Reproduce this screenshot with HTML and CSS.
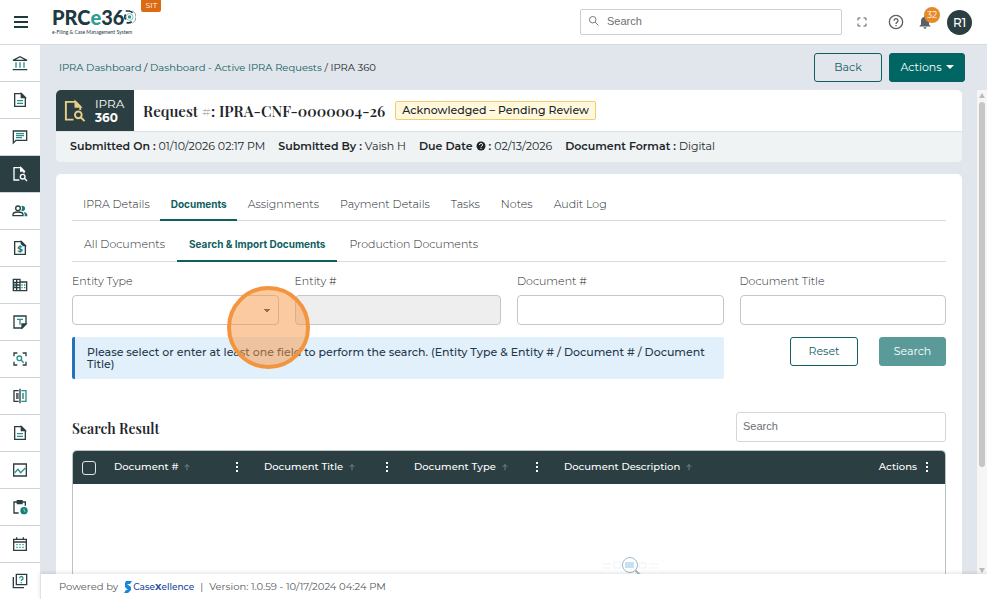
FILE: index.html
```
<!DOCTYPE html>
<html lang="en">
<head>
  <meta charset="UTF-8">
  <meta name="viewport" content="width=device-width, initial-scale=1.0">
  <title>IPRA 360 | Search &amp; Import Documents</title>
  <link rel="stylesheet" href="styles.css">
</head>
<body>
  <svg class="sprite" aria-hidden="true">
    <symbol id="i-doc" viewBox="0 0 24 24">
      <path d="M14 2.500H4v19h16V8.500z"/><path d="M14 2.500v6h6z" fill="currentColor"/>
      <path class="accent" d="M7.500 13h9M7.500 17h9"/>
    </symbol>
    <symbol id="i-docsearch" viewBox="0 0 24 24">
      <path d="M11 21H3V2.500h10l5 5V11"/><path d="M13 2.500v5h5z" fill="currentColor"/>
      <circle cx="16" cy="16" r="3.500"/><path d="M18.500 18.500l4 4"/>
    </symbol>
    <symbol id="i-up" viewBox="0 0 10 10"><path d="M5 9V2M2 5l3-3 3 3"/></symbol>
    <symbol id="i-dots" viewBox="0 0 4 12"><path d="M1 1h2v2H1zM1 5h2v2H1zM1 9h2v2H1z"/></symbol>
  </svg>

  <header class="topbar">
    <button class="menu-btn" aria-label="Toggle menu"><span></span><span></span><span></span></button>
    <a class="logo" href="#">
      <span class="logo-name">PRC<em>e</em>36<svg class="logo-ring" viewBox="0 0 14 18">
        <path d="M2 2h4a7 7 0 0 1 4 2M2 6a5 5 0 0 0 0 6M3 15.500a7 7 0 0 0 6-1" fill="none" stroke="#20393f" stroke-width="2"/>
        <path d="M10 2a8 8 0 0 1 0 14" fill="none" stroke="#6f9297" stroke-width="1"/>
        <circle cx="6.500" cy="9" r="2" fill="#2a9d94" stroke="none"/>
        <circle cx="6.500" cy="9" r="4" fill="none" stroke="#7fb9b6" stroke-width="1"/>
      </svg></span>
      <span class="logo-sub">e-Filing &amp; Case Management System</span>
    </a>
    <span class="env">SIT</span>
    <div class="top-search">
      <svg viewBox="0 0 14 14"><circle cx="5.500" cy="5.500" r="3.800"/><path d="M8.300 8.300l4 4"/></svg>
      <input type="text" placeholder="Search" aria-label="Search">
    </div>
    <button class="icon-btn" aria-label="Full screen">
      <svg class="full" viewBox="0 0 10 10"><path d="M1 3.500V1h2.500M6.500 1H9v2.500M9 6.500V9H6.500M3.500 9H1V6.500"/></svg>
    </button>
    <button class="icon-btn" aria-label="Help">
      <svg class="help" viewBox="0 0 24 24"><circle cx="12" cy="12" r="10"/><path d="M9 10a3 3 0 1 1 4.500 2.500C12.500 13 12 13.500 12 15M12 16.500v2"/></svg>
    </button>
    <button class="icon-btn bell" aria-label="Notifications">
      <svg viewBox="0 0 12 14"><path d="M6 1a1 1 0 0 1 1 1c2 .6 3 2 3 4v3.500L11.500 11v.6H.5V11L2 9.500V6c0-2 1-3.400 3-4a1 1 0 0 1 1-1zM4.500 12.300h3a1.500 1.500 0 0 1-3 0z"/></svg>
      <span class="count">32</span>
    </button>
    <button class="avatar">R1</button>
  </header>

  <div class="shell">
    <nav class="sidebar">
      <a href="#" aria-label="Home"><svg viewBox="0 0 24 24"><path d="M1.500 8L12 2.500 22.500 8zM1 22h22"/><path class="accent" d="M6 11v8M12 11v8M18 11v8"/></svg></a>
      <a href="#" aria-label="Filings"><svg><use href="#i-doc"/></svg></a>
      <a href="#" aria-label="Messages"><svg viewBox="0 0 24 24"><path d="M2 21V3h20v14H6z"/><path class="accent" d="M6 7h12M6 10h12M6 13h9"/></svg></a>
      <a href="#" class="active" aria-label="IPRA"><svg><use href="#i-docsearch"/></svg></a>
      <a href="#" aria-label="Contacts"><svg viewBox="0 0 24 24"><circle cx="9" cy="8" r="3.500"/><path d="M1.500 19v-1.500c0-2.500 4-4 7.500-4s7.500 1.500 7.500 4V19z"/><path class="fill" d="M14 4.500a4 4 0 1 1 0 7.200 6 6 0 0 0 0-7.200zM17 13c3 .6 6 2 6 4.500V20h-4v-2.500c0-2-.8-3.400-2-4.500z"/></svg></a>
      <a href="#" aria-label="Billing"><svg viewBox="0 0 24 24"><path d="M14 2.500H4v19h16V8.500z"/><path d="M14 2.500v3l3 3h3z" fill="currentColor"/><text class="dollar" x="12" y="18">$</text></svg></a>
      <a href="#" aria-label="Organizations"><svg viewBox="0 0 24 24"><path d="M2 3.500h10v17H2zM2 8h10M2 12h10M2 16h10M7 3.500v17M12 7.500h10v13H12"/><path class="accent" d="M14 12h2M14 16h2M18 12h2M18 16h2M3.500 10h2M3.500 14h2"/></svg></a>
      <a href="#" aria-label="Templates"><svg viewBox="0 0 24 24"><path d="M3 3h18v12l-6 6H3z"/><path d="M21 15h-6v6z" fill="currentColor"/><path class="accent" d="M7.500 8h9M12 8v8"/></svg></a>
      <a href="#" aria-label="Scan search"><svg viewBox="0 0 24 24"><path d="M3 8V3h5M16 3h5v5M21 16v5h-5M8 21H3v-5"/><circle class="accent" cx="11" cy="11" r="3.500"/><path class="accent" d="M13.500 13.500l4 4"/></svg></a>
      <a href="#" aria-label="Compare"><svg viewBox="0 0 24 24"><path d="M10 4H3v16h7M12 1v22M6 9h4M6 12h4M6 15h4"/><path class="accent" d="M14 4h7v16h-7M15 9h3M15 12h3M15 15h3"/></svg></a>
      <a href="#" aria-label="Documents"><svg><use href="#i-doc"/></svg></a>
      <a href="#" aria-label="Reports"><svg viewBox="0 0 24 24"><path d="M2.500 3h19v18h-19z"/><path class="accent" d="M4 16l5-5 4 5 7-7"/></svg></a>
      <a href="#" aria-label="Pending tasks"><svg viewBox="0 0 24 24"><path d="M10 21H3V4.500h17V10"/><path d="M8 2.500h7V7H8z" fill="currentColor"/><circle class="fill" cx="18" cy="17.500" r="5.500"/><path d="M18 14.500v3l2 1.500" stroke="#fff" stroke-width="1"/></svg></a>
      <a href="#" aria-label="Calendar"><svg viewBox="0 0 24 24"><path d="M2.500 5h19v16.500h-19zM3 9h18M7 2v3M17 2v3"/><path class="accent" d="M6.500 13h2M11 13h2M15.500 13h2M6.500 17h2M11 17h2M15.500 17h2"/></svg></a>
      <a href="#" aria-label="Help library"><svg viewBox="0 0 24 24"><path d="M6.500 2h15.500v15.500H6.500zM2 6v16h16"/><path class="accent" d="M11.500 8a2.500 2.500 0 1 1 3.700 2c-1 .6-1.200 1-1.200 2M14 13.500v2"/></svg></a>
    </nav>

    <div class="main">
      <div class="page-head">
        <div class="breadcrumb"><a href="#">IPRA Dashboard</a> / <a href="#">Dashboard - Active IPRA Requests</a> / <span>IPRA 360</span></div>
        <button class="btn btn-outline">Back</button>
        <button class="btn btn-actions">Actions <i class="caret"></i></button>
      </div>

      <div class="scroll-area">
        <div class="content">
          <section class="request">
            <div class="request-top">
              <div class="badge-360">
                <svg><use href="#i-docsearch"/></svg>
                <div><span>IPRA</span><b>360</b></div>
              </div>
              <h1>Request <small>#</small>: IPRA-CNF-0000004-26</h1>
              <span class="status">Acknowledged – Pending Review</span>
            </div>
            <div class="request-info">
              <div><b>Submitted On :</b> 01/10/2026 02:17 PM</div>
              <div><b>Submitted By :</b> Vaish H</div>
              <div><b>Due Date <svg viewBox="0 0 10 10"><circle cx="5" cy="5" r="4.500"/><path d="M3.500 4a1.500 1.500 0 1 1 2.200 1.200C5 5.500 5 5.800 5 6.200M5 7v1"/></svg> :</b> 02/13/2026</div>
              <div><b>Document Format :</b> Digital</div>
            </div>
          </section>

          <section class="panel">
            <nav class="tabs">
              <a href="#">IPRA Details</a>
              <a href="#" class="active">Documents</a>
              <a href="#">Assignments</a>
              <a href="#">Payment Details</a>
              <a href="#">Tasks</a>
              <a href="#">Notes</a>
              <a href="#">Audit Log</a>
            </nav>
            <nav class="tabs sub-tabs">
              <a href="#">All Documents</a>
              <a href="#" class="active">Search &amp; Import Documents</a>
              <a href="#">Production Documents</a>
            </nav>

            <form class="filters">
              <div class="field">
                <label for="entityType">Entity Type</label>
                <select id="entityType"><option></option></select>
                <span class="click-mark"></span>
              </div>
              <div class="field">
                <label for="entityNo">Entity #</label>
                <input type="text" id="entityNo" disabled>
              </div>
              <div class="field">
                <label for="documentNo">Document #</label>
                <input type="text" id="documentNo">
              </div>
              <div class="field">
                <label for="documentTitle">Document Title</label>
                <input type="text" id="documentTitle">
              </div>
              <div class="note">Please select or enter at least one field to perform the search. (Entity Type &amp; Entity # / Document # / Document Title)</div>
              <div class="filter-btns">
                <button type="reset" class="btn btn-outline">Reset</button>
                <button type="button" class="btn btn-search">Search</button>
              </div>
            </form>

            <div class="result-head">
              <h2>Search Result</h2>
              <input type="text" placeholder="Search" aria-label="Search results">
            </div>

            <div class="grid-box">
              <table>
                <thead>
                  <tr>
                    <th class="col-check"><input type="checkbox" aria-label="Select all"></th>
                    <th class="col"><div>Document # <svg class="up"><use href="#i-up"/></svg><svg class="dots"><use href="#i-dots"/></svg></div></th>
                    <th class="col"><div>Document Title <svg class="up"><use href="#i-up"/></svg><svg class="dots"><use href="#i-dots"/></svg></div></th>
                    <th class="col"><div>Document Type <svg class="up"><use href="#i-up"/></svg><svg class="dots"><use href="#i-dots"/></svg></div></th>
                    <th><div>Document Description <svg class="up"><use href="#i-up"/></svg></div></th>
                    <th class="col-actions"><div>Actions <svg class="dots"><use href="#i-dots"/></svg></div></th>
                  </tr>
                </thead>
              </table>
              <div class="empty">
                <svg viewBox="0 0 60 28">
                  <path d="M2 11h9M2 15h9M14 9h7v6h-7zM39 10h7v5h-7zM49 11h9M49 15h9" stroke="#edf1f4"/>
                  <path d="M25 9h9v6h-9z" fill="#c5e2f3" stroke="none"/>
                  <circle cx="30" cy="12" r="7.500" stroke="#9fb8c8"/>
                  <path d="M35.500 17.500l7 7" stroke="#9fb8c8" stroke-width="2"/>
                </svg>
              </div>
            </div>
          </section>
        </div>
        <div class="scrollbar"><i class="arrow"></i><i class="thumb"></i><i class="arrow down"></i></div>
      </div>

      <footer class="footer">
        <span>Powered by</span>
        <a class="brand" href="#"><svg viewBox="0 0 8 12"><path d="M2 0h6L6 3H3l4 3v3l-3 3H0l2-3h2L1 6V2z" fill="#1489d8"/></svg>Case<b>X</b>ellence</a>
        <span>|</span>
        <span>Version: 1.0.59 - 10/17/2024 04:24 PM</span>
      </footer>
    </div>
  </div>
</body>
</html>
```

FILE: styles.css
```
* {
  box-sizing: border-box;
}

body {
  margin: 0;
  height: 100vh;
  display: flex;
  flex-direction: column;
  overflow: hidden;
  font-family: Montserrat, Inter, sans-serif;
  font-size: 11px;
  line-height: 14px;
  color: #212529;
  background-color: #fff;
}

a {
  text-decoration: none;
  color: inherit;
}

button,
input,
select {
  font-family: inherit;
  font-size: 11px;
}

button {
  cursor: pointer;
}

svg {
  fill: none;
  stroke: currentColor;
  flex: none;
}

.sprite {
  display: none;
}

/* top bar */
.topbar {
  display: flex;
  align-items: center;
  height: 45px;
  flex: none;
  padding: 0 15px 0 14px;
  border-bottom: 1px solid #d5dae0;
  background-color: #fff;
}

.menu-btn {
  display: flex;
  flex-direction: column;
  gap: 3px;
  width: 14px;
  padding: 0;
  border: none;
  background: none;
}

.menu-btn span {
  height: 2px;
  width: 14px;
  background-color: #20393f;
}

.logo {
  display: flex;
  flex-direction: column;
  margin-left: 24px;
  padding-bottom: 5px;
  font-family: Lato, sans-serif;
  color: #20393f;
}

.logo-name {
  display: flex;
  align-items: center;
  font-size: 20px;
  font-weight: 900;
  line-height: 24px;
}

.logo-name em {
  font-style: normal;
  color: #2a9d94;
}

.logo-ring {
  width: 12px;
  height: 16px;
}

.logo-sub {
  font-size: 5px;
  line-height: 6px;
}

.env {
  align-self: flex-start;
  margin-left: 5px;
  padding: 0 4px;
  height: 12px;
  font-size: 8px;
  line-height: 11px;
  color: #fff;
  background-color: #dc6a12;
  border-radius: 0 0 2px 2px;
}

.top-search {
  display: flex;
  align-items: center;
  gap: 7px;
  width: 262px;
  height: 26px;
  margin-left: auto;
  margin-right: 15px;
  padding: 0 7px 2px;
  border: 1px solid #ccd0d4;
  border-radius: 2px;
}

.top-search svg {
  width: 12px;
  height: 12px;
  color: #666;
}

.top-search input {
  flex: 1;
  border: none;
  outline: none;
  padding: 0;
}

input::placeholder {
  font-family: "Liberation Sans", sans-serif;
  color: #6c6f73;
}

.icon-btn {
  display: flex;
  justify-content: center;
  padding: 0;
  margin-right: 21px;
  border: none;
  background: none;
  color: #5b6066;
}

.icon-btn .full {
  width: 10px;
  height: 10px;
}

.icon-btn .help {
  width: 16px;
  height: 16px;
  stroke-width: 2;
}

.icon-btn.bell {
  position: relative;
  margin-left: -6px;
  margin-right: 16px;
}

.bell svg {
  width: 12px;
  height: 14px;
  fill: #5b6066;
  stroke: none;
}

.count {
  position: absolute;
  top: -8px;
  left: 5px;
  width: 16px;
  height: 16px;
  border-radius: 50%;
  font-size: 9px;
  line-height: 15px;
  text-align: center;
  color: #fff;
  background-color: #e58a25;
}

.avatar {
  width: 25px;
  height: 25px;
  padding: 0;
  border: none;
  border-radius: 50%;
  font-size: 12px;
  font-weight: 500;
  color: #fff;
  background-color: #2b3e42;
}

/* side menu */
.shell {
  display: flex;
  flex: 1;
  min-height: 0;
}

.sidebar {
  width: 40px;
  flex: none;
  overflow: hidden;
}

.sidebar a {
  display: flex;
  align-items: center;
  justify-content: center;
  height: 37px;
  border-bottom: 1px solid #ccd3d9;
  color: #2b3e42;
}

.sidebar a.active {
  color: #fff;
  background-color: #2b3e42;
}

.sidebar svg {
  width: 16px;
  height: 16px;
  stroke-width: 2;
}

.accent {
  stroke: #2a8f88;
}

.fill {
  fill: #148078;
  stroke: none;
}

.dollar {
  font-size: 13px;
  font-weight: bold;
  text-anchor: middle;
  fill: #148078;
  stroke: none;
}

.main {
  display: flex;
  flex-direction: column;
  flex: 1;
  min-width: 0;
  background-color: #e1e5ec;
}

.page-head {
  display: flex;
  align-items: center;
  gap: 7px;
  height: 45px;
  flex: none;
  padding: 0 22px 0 19px;
}

.breadcrumb {
  flex: 1;
  font-size: 10px;
}

.breadcrumb a {
  color: #0f5f60;
}

.btn {
  height: 29px;
  padding: 0 0 2px;
  border: 1px solid #0f5f60;
  border-radius: 3px;
}

.btn-outline {
  width: 68px;
  color: #0f5f60;
  background-color: transparent;
}

.btn-actions {
  width: 76px;
  color: #fff;
  background-color: #006663;
}

.caret {
  display: inline-block;
  margin-left: 1px;
  vertical-align: 2px;
  border-top: 4px solid;
  border-left: 4px solid transparent;
  border-right: 4px solid transparent;
}

.btn-search {
  width: 67px;
  color: #fff;
  border-color: #5a9b99;
  background-color: #5a9b99;
}

/* scrolling part */
.scroll-area {
  display: flex;
  flex: 1;
  min-height: 0;
}

.content {
  display: flex;
  flex-direction: column;
  gap: 12px;
  flex: 1;
  min-width: 0;
  padding: 0 15px 0 16px;
  overflow: hidden;
}

.scrollbar {
  display: flex;
  flex-direction: column;
  align-items: center;
  width: 10px;
  padding: 3px 0 1px;
  background-color: #f6f6f6;
}

.arrow {
  border-bottom: 5px solid #bbb;
  border-left: 3px solid transparent;
  border-right: 3px solid transparent;
}

.arrow.down {
  border-bottom: none;
  border-top: 5px solid #bbb;
  margin-top: auto;
}

.thumb {
  width: 6px;
  height: 76%;
  margin-top: 4px;
  border-radius: 3px;
  background-color: #c6c6c6;
}

.request {
  flex: none;
  border-radius: 5px;
  overflow: hidden;
  background-color: #fff;
}

.request-top {
  display: flex;
  align-items: center;
  height: 41px;
}

.badge-360 {
  display: flex;
  align-items: center;
  gap: 9px;
  width: 78px;
  height: 41px;
  padding-left: 7px;
  font-size: 12px;
  line-height: 14px;
  color: #fff;
  background-color: #2b3e42;
}

.badge-360 span,
.badge-360 b {
  display: block;
}

.badge-360 svg {
  width: 23px;
  height: 26px;
  color: #e8cf86;
  stroke-width: 2;
}

h1,
h2 {
  margin: 0;
  font-family: "Playfair Display", "Liberation Serif", serif;
  font-weight: 600;
}

h1 {
  margin-left: 9px;
  font-size: 15px;
}

h1 small {
  font-size: 15px;
  font-weight: normal;
  color: #888;
}

.status {
  margin-left: 10px;
  padding: 1px 6px 2px;
  border: 1px solid #f0cf6a;
  border-radius: 2px;
  font-weight: 500;
  background-color: #fff8dc;
}

.request-info {
  display: flex;
  align-items: center;
  gap: 13px;
  height: 31px;
  padding: 0 14px 2px;
  border-top: 1px solid #dde2e4;
  background-color: #eff3f4;
}

.request-info b {
  font-weight: 600;
}

.request-info svg {
  width: 10px;
  height: 10px;
  vertical-align: -1px;
  fill: #212529;
  stroke: none;
}

.request-info svg path {
  fill: none;
  stroke: #fff;
}

.panel {
  display: flex;
  flex-direction: column;
  flex: 1;
  min-height: 0;
  padding: 14px 16px 0;
  border-radius: 5px 5px 0 0;
  background-color: #fff;
}

.tabs {
  display: flex;
  flex: none;
  border-bottom: 1px solid #d9dcdf;
  font-weight: 300;
}

.tabs a {
  padding: 9px 10px 8px 11px;
  margin-bottom: -1px;
  border-bottom: 2px solid transparent;
}

.tabs .active {
  font-family: Inter, sans-serif;
  font-size: 10px;
  font-weight: bold;
  color: #0f5f60;
  border-bottom-color: #0f5f60;
}

.sub-tabs {
  margin-top: 8px;
}

.sub-tabs a {
  padding: 8px 12px 9px;
}

.filters {
  display: grid;
  grid-template-columns: repeat(4, 1fr);
  gap: 12px 16px;
  padding-top: 12px;
}

.field {
  position: relative;
  display: flex;
  flex-direction: column;
  gap: 7px;
  min-width: 0;
  font-weight: 300;
}

.field input,
.field select {
  width: 100%;
  height: 30px;
  border: 1px solid #c3c7cb;
  border-radius: 4px;
  background-color: #fff;
}

.field select {
  appearance: none;
  background-image: linear-gradient(45deg, transparent 50%, #444 50%), linear-gradient(-45deg, transparent 50%, #444 50%);
  background-size: 3px 3px;
  background-position: right 11px top 13px, right 8px top 13px;
  background-repeat: no-repeat;
}

.field input:disabled {
  background-color: #eee;
}

/* highlight ring over the drop-down */
.click-mark {
  position: absolute;
  z-index: 1;
  top: 12px;
  right: -31px;
  width: 83px;
  height: 83px;
  border: 4px solid #f3953f;
  border-radius: 50%;
  background-color: rgba(250, 150, 65, .5);
  pointer-events: none;
}

.note {
  grid-column: span 3;
  padding: 9px 8px 9px 12px;
  border-left: 3px solid #2273b9;
  border-radius: 2px;
  font-weight: 500;
  line-height: 12px;
  color: #24384a;
  background-color: #e2f0fc;
}

.filter-btns {
  display: flex;
  justify-content: flex-end;
  gap: 21px;
}

.result-head {
  display: flex;
  align-items: center;
  justify-content: space-between;
  margin: 33px 0 8px;
}

h2 {
  padding-top: 4px;
  font-size: 14px;
}

.result-head input {
  width: 210px;
  height: 30px;
  padding: 0 6px 2px;
  border: 1px solid #d4d7da;
  border-radius: 3px;
}

.grid-box {
  flex: 1;
  min-height: 0;
  overflow: hidden;
  border: 1px solid #b9c4c9;
  border-bottom: none;
  border-radius: 5px 5px 0 0;
}

table {
  width: 100%;
  border-collapse: collapse;
  table-layout: fixed;
}

th {
  height: 33px;
  padding: 0 15px 2px 10px;
  font-size: 10px;
  font-weight: 500;
  text-align: left;
  color: #fff;
  background-color: #2b3e42;
}

th div {
  display: flex;
  align-items: center;
}

.col-check {
  width: 31px;
  padding: 0 0 0 9px;
}

.col {
  width: 150px;
}

.col-actions {
  width: 84px;
  padding-right: 16px;
}

.col-actions div {
  justify-content: flex-end;
  gap: 8px;
}

.col-check input {
  appearance: none;
  display: block;
  width: 14px;
  height: 14px;
  margin: 0;
  border: 1px solid #dfe5e7;
  border-radius: 3px;
}

.up {
  width: 8px;
  height: 8px;
  margin-left: 5px;
  color: #82939a;
}

.dots {
  width: 4px;
  height: 12px;
  margin-left: auto;
  fill: #fff;
  stroke: none;
}

.col-actions .dots {
  margin-left: 0;
}

.empty {
  display: flex;
  justify-content: center;
  padding: 69px 0 0 242px;
}

.empty svg {
  width: 60px;
  height: 28px;
}

.footer {
  display: flex;
  align-items: center;
  gap: 6px;
  height: 25px;
  flex: none;
  padding-left: 18px;
  border-left: 1px solid #dfe3e8;
  font-size: 10px;
  color: #555b60;
  background-color: #fff;
  box-shadow: 0 -1px 4px rgba(0, 0, 0, .12);
}

.brand {
  display: flex;
  align-items: center;
  font-size: 9px;
  font-weight: 500;
  color: #1746a0;
}

.brand svg {
  width: 8px;
  height: 12px;
  margin-right: 1px;
  stroke: none;
}
```
